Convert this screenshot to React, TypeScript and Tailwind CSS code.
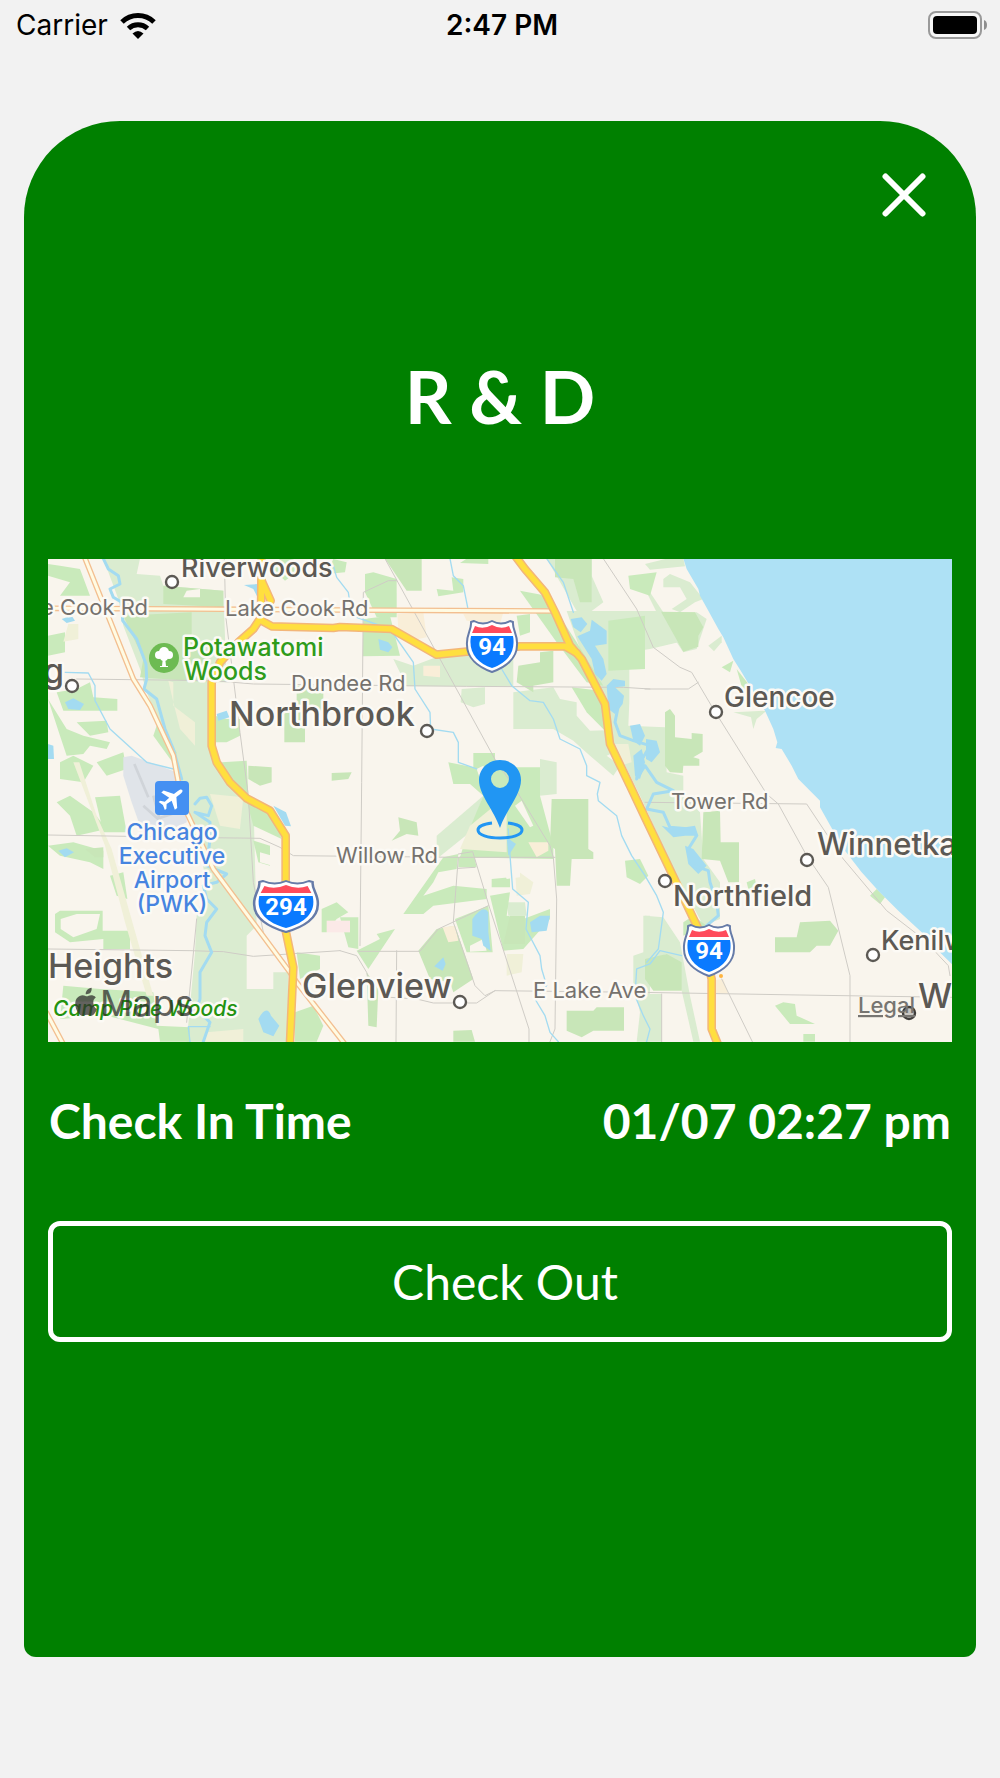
import type { ReactNode } from "react";

const forest = [
  "M190,29 L300,29 L290,75 L360,80 L370,110 L550,125 L560,400 L515,400 L515,590 L560,690 L640,750 L650,1130 L620,1160 L620,1320 L700,1320 L700,1270 L745,1270 L745,1478 L440,1478 L465,1210 L470,1100 L500,1010 L480,900 L440,790 L420,690 L360,530 L320,430 L300,360 L250,230 L235,150Z",
  "M1060,330 L1120,350 L1200,320 L1290,300 L1420,330 L1420,412 L1100,412Z",
  "M1265,420 L1335,415 L1335,465 L1300,475 L1262,460Z",
  "M1420,430 L1540,415 L1560,450 L1610,460 L1610,500 L1650,545 L1745,542 L1745,600 L1700,620 L1740,650 L1720,680 L1650,620 L1600,575 L1540,540 L1420,540Z",
  "M1500,630 L1550,640 L1550,735 L1500,740Z",
  "M1520,29 L1655,29 L1655,80 L1690,160 L1655,186 L1610,186Z",
  "M1580,186 L1860,186 L1915,280 L1830,300 L1768,310 L1768,460 L1765,530 L1875,535 L1880,670 L1930,680 L1930,740 L1980,790 L1990,930 L2040,1000 L2040,1110 L1990,1130 L1900,960 L1800,740 L1710,560 L1690,430 L1620,300Z",
  "M1815,190 L1970,190 L2000,210 L1970,300 L1930,310 L1910,280 L1815,300Z",
  "M1870,90 L1890,75 L1950,100 L1990,150 L1965,160 L1920,190 L1895,180 L1940,150 L1920,115 L1870,115Z",
  "M1815,45 L1880,29 L1930,29 L1935,52 L1830,62Z",
  "M1815,120 L1830,130 L1870,190 L1850,190Z",
  "M2005,290 L2045,260 L2045,280 L2022,307Z",
  "M2080,490 L2180,485 L2150,510 L2140,540 L2133,505Z",
  "M1815,1100 L1870,1105 L1920,1180 L1950,1340 L1980,1478 L1960,1478 L1925,1325 L1880,1215 L1815,1240Z",
  "M1815,1335 L1865,1335 L1865,1478 L1815,1478Z",
  "M1810,1100 L1830,1100 L1830,1478 L1790,1478 L1800,1390 L1780,1300 L1780,1220 L1810,1210Z",
  "M1400,1060 L1455,1060 L1460,1100 L1405,1100Z",
  "M1190,860 L1330,740 L1290,850 L1190,930Z",
];

const parks = [
  "M24,45 L60,50 L120,60 L150,140 L60,140 L90,100 L24,80Z",
  "M24,260 L75,250 L75,310 L24,320Z",
  "M50,430 L110,420 L150,400 L160,445 L232,450 L232,485 L70,485Z",
  "M24,450 L80,540 L130,560 L210,580 L200,600 L150,590 L130,615 L80,620 L60,560Z",
  "M110,520 L200,515 L205,550 L150,560Z",
  "M350,530 L410,610 L405,650 L340,560Z",
  "M60,640 L100,620 L160,650 L130,700 L60,690Z",
  "M170,640 L250,610 L260,660 L200,680Z",
  "M525,500 L560,510 L600,510 L600,560 L560,580 L525,580Z",
  "M545,640 L620,635 L625,740 L565,690Z",
  "M880,30 L920,40 L915,70 L860,75Z",
  "M720,29 L760,29 L770,70 L735,95 L700,60Z",
  "M975,75 L1000,70 L1070,90 L1070,205 L1010,205 L975,130Z",
  "M970,210 L1050,200 L1080,320 L968,322Z",
  "M1190,120 L1240,125 L1235,85 L1270,90 L1270,130 L1195,142Z",
  "M1280,29 L1345,29 L1345,45 L1260,42Z",
  "M1430,200 L1470,195 L1470,250 L1440,260Z",
  "M1440,125 L1520,140 L1610,280 L1690,410 L1640,400 L1550,280Z",
  "M1595,415 L1680,425 L1695,545 L1640,490Z",
  "M1705,215 L1815,200 L1815,360 L1705,365Z",
  "M1765,80 L1850,70 L1830,140 L1770,120Z",
  "M2090,360 L2125,405 L2110,430Z",
  "M2045,355 L2080,335 L2070,370Z",
  "M1225,640 L1300,655 L1300,612 L1365,612 L1365,655 L1500,655 L1500,740 L1540,890 L1540,930 L1260,925 L1280,860 L1330,740 L1290,705 L1240,705Z",
  "M1090,1095 L1210,925 L1255,915 L1250,960 L1195,970 L1180,1000 L1150,1040 L1240,1010 L1340,1020 L1340,1050 L1180,1070 L1150,1095Z",
  "M1245,1110 L1345,1070 L1358,1210 L1280,1210Z",
  "M1300,910 L1310,955 L1255,955 L1255,925Z",
  "M1355,990 L1410,985 L1410,1015 L1355,1015Z",
  "M1350,1040 L1410,1030 L1400,1100 L1450,1110 L1530,1080 L1530,1110 L1450,1200 L1390,1205Z",
  "M950,1205 L1020,1170 L1010,1155 L1065,1140 L985,1260Z",
  "M900,1105 L955,1105 L955,1200 L925,1195Z",
  "M1755,935 L1800,930 L1825,980 L1800,1005 L1760,985Z",
  "M2120,1000 L2145,990 L2150,1015 L2125,1020Z",
  "M2490,1040 L2510,1020 L2535,1045 L2520,1065Z",
  "M2205,1370 L2230,1360 L2265,1365 L2270,1400 L2325,1425 L2250,1425Z",
  "M2290,1455 L2325,1455 L2325,1478 L2290,1478Z",
  "M45,1095 L60,1085 L188,1085 L188,1145 L270,1145 L270,1200 L190,1200 L190,1170 L90,1180 L45,1150Z",
  "M24,890 L100,880 L190,905 L190,960 L150,940 L60,920Z",
  "M50,760 L90,740 L160,790 L200,840 L110,860 L90,800Z",
  "M165,745 L240,740 L260,850 L190,850Z",
  "M210,980 L250,970 L262,1050 L230,1040Z",
  "M70,1310 L180,1320 L340,1330 L350,1430 L450,1435 L450,1478 L360,1478 L355,1440 L200,1400 L60,1410Z",
  "M620,755 L700,785 L725,870 L640,830Z",
  "M640,875 L690,890 L690,950 L655,940Z",
  "M845,1080 L890,1060 L925,1090 L890,1110 L860,1150 L845,1150Z",
  "M770,1210 L840,1220 L840,1260 L780,1290Z",
  "M765,1390 L820,1370 L850,1430 L830,1478 L765,1478Z",
  "M1930,1120 L1960,1100 L2000,1130 L1930,1160Z",
];

const woods = [
  "M250,200 L455,190 L455,280 L500,330 L500,400 L300,385 L310,330Z",
  "M370,110 L550,125 L550,175 L370,165Z",
  "M770,410 L850,410 L850,485 L795,485 L795,580 L733,580 L733,485 L770,485Z",
  "M625,650 L695,655 L695,700 L660,710 L625,690Z",
  "M875,672 L935,670 L925,690 L875,695Z",
  "M1035,29 L1145,29 L1145,125 L1100,125Z",
  "M1545,29 L1655,29 L1655,160 L1620,160 L1600,90 L1545,85Z",
  "M1435,350 L1500,340 L1500,310 L1540,305 L1540,400 L1480,410 L1480,430 L1430,400Z",
  "M1863,188 L1965,190 L1990,235 L1975,260 L1975,293 L1930,308Z",
  "M1875,490 L1890,480 L1905,500 L1905,565 L1955,570 L1955,552 L1988,555 L1988,608 L1960,625 L1978,630 L1978,650 L1930,650 L1928,672 L1890,670 L1875,650Z",
  "M1990,790 L2040,785 L2042,880 L2097,880 L2097,1000 L2065,1000 L2040,935 L1985,930Z",
  "M2205,1165 L2270,1165 L2280,1120 L2370,1115 L2395,1145 L2370,1190 L2330,1190 L2310,1210 L2205,1210Z",
  "M1815,1230 L1880,1215 L1925,1240 L1925,1325 L1840,1325 L1815,1290Z",
  "M1535,750 L1645,750 L1645,900 L1660,910 L1660,930 L1595,930 L1590,1010 L1550,1010 L1545,900 L1530,890Z",
  "M1075,805 L1130,820 L1135,860 L1100,855 L1055,875 L1080,845Z",
  "M1135,1205 L1190,1140 L1245,1130 L1300,1290 L1240,1330 L1230,1300 L1170,1290Z",
  "M1410,1100 L1455,1100 L1455,1185 L1390,1185Z",
  "M980,1270 L1015,1320 L1010,1435 L985,1430Z",
  "M1580,1385 L1660,1385 L1670,1375 L1752,1375 L1752,1445 L1660,1445 L1625,1465 L1580,1445Z",
  "M1240,1445 L1295,1443 L1305,1478 L1240,1478Z",
  "M1310,845 L1380,840 L1380,895 L1310,880Z",
  "M135,900 L190,895 L190,925 L165,925Z",
];

const clearings = [
  "M62,1110 L110,1095 L180,1095 L170,1140 L100,1165 L62,1140Z",
  "M440,125 L480,120 L480,145 L430,145Z",
  "M1425,770 L1445,755 L1480,830 L1470,835Z",
  "M1290,1190 L1330,1170 L1340,1205 L1290,1208Z",
  "M1390,960 L1440,950 L1440,985 L1400,990Z",
  "M1310,660 L1330,650 L1345,690 L1320,690Z",
  "M400,700 L435,700 L440,740 L400,740Z",
  "M660,910 L730,930 L730,960 L660,940Z",
];

const sand = [
  "M385,395 L400,400 L400,470 L465,520 L465,590 L420,540 L405,480Z",
  "M85,225 L115,225 L115,270 L70,278Z",
  "M100,640 L118,640 L170,800 L215,900 L300,1200 L340,1340 L320,1340 L255,1120 L195,890Z",
  "M510,735 L610,745 L600,840 L540,830Z",
  "M1290,830 L1400,740 L1400,910 L1260,900Z",
  "M1425,960 L1480,1000 L1470,1035 L1430,1040Z",
  "M1400,1215 L1450,1215 L1445,1270 L1400,1280Z",
  "M1725,585 L1765,585 L1775,640 L1740,650Z",
  "M500,1450 L610,1440 L610,1478 L490,1478Z",
];

const blocks = [
  "M1072,195 L1150,190 L1160,265 L1110,275 L1075,240Z",
  "M1270,195 L1390,190 L1380,225 L1280,215Z",
  "M1465,880 L1525,880 L1525,905 L1490,925Z",
  "M1208,1135 L1245,1130 L1255,1175 L1225,1180Z",
  "M1150,350 L1200,350 L1200,385 L1150,380Z",
  "M2010,1295 L2050,1290 L2065,1335 L2010,1335Z",
];

const ponds = [
  "M75,460 L100,448 L132,465 L120,483 L85,480Z",
  "M24,585 L40,590 L42,630 L24,630Z",
  "M65,210 L95,200 L105,215 L80,222Z",
  "M530,495 L560,485 L568,505 L535,515Z",
  "M612,108 L655,105 L655,150 L640,120Z",
  "M55,905 L80,898 L102,910 L75,925Z",
  "M1015,270 L1045,280 L1057,295 L1045,310 L1020,302Z",
  "M1297,1110 Q1330,1065 1345,1090 L1345,1150 L1352,1205 L1330,1190 L1325,1170 L1297,1160Z",
  "M1470,1120 L1500,1100 L1530,1100 L1520,1145 L1475,1150Z",
  "M1183,1252 L1210,1225 L1217,1245 L1208,1265Z",
  "M1400,865 L1428,885 L1405,920Z",
  "M655,1410 Q680,1365 693,1400 L718,1430 L700,1462 L670,1450Z",
  "M700,770 L738,790 L753,832 L735,830Z",
  "M1592,210 L1625,205 L1642,225 L1622,250 L1600,235Z",
  "M1612,262 L1650,245 L1655,212 L1700,245 L1700,285 L1665,290 L1690,330 L1700,375 L1685,395 L1665,375 L1655,330Z",
  "M1720,390 L1755,395 L1755,412 L1725,415 L1752,440 L1748,465 L1725,495 L1705,480 L1700,410Z",
  "M1770,530 L1800,525 L1815,560 L1800,590 L1780,575Z",
  "M1818,570 L1850,575 L1860,610 L1835,640 L1818,630Z",
  "M1780,620 L1805,600 L1815,640 L1800,690 L1785,680Z",
  "M1865,830 L1900,840 L1965,830 L1975,860 L1935,860 L1900,865Z",
  "M1935,890 L1960,900 L2000,950 L1975,975 L1945,945Z",
];

const lake =
  "M1930,29 L1940,60 1975,120 1980,140 2005,185 2035,240 2050,265 2080,330 2105,370 2135,420 2175,485 2200,540 2212,580 2207,597 2225,600 2255,650 2275,690 2340,755 2340,775 2385,855 2415,905 2465,970 2515,1025 2575,1085 2645,1150 2695,1205 2740,1250 2740,25Z";

const rivers = [
  "M190,29 L205,60 235,80 240,105 210,120 220,145 245,160 248,215 290,270 318,345 320,390 312,420 350,450 375,540 400,600 425,690",
  "M465,765 L480,748 500,745 515,770 505,800 465,790 510,820 510,870 500,950 560,975 530,1000 490,1010 500,1050 530,1080 500,1120 495,1160 515,1210 480,1270 480,1350 470,1380 510,1420 490,1478",
  "M1735,470 L1725,520 1740,560 1780,575 1830,590 1795,650 1790,690 1815,650 1850,700 1900,725 1840,735 1820,780 1870,790 1890,835 1950,840 1970,860 1945,900 1960,950 2005,965 2010,1000 2030,1060 2035,1100 2000,1130",
];

const creeks = [
  "M75,370 L145,372 165,410 165,455 210,540 320,640 400,660",
  "M880,50 L890,85 925,130 935,200 1050,240 1120,340 1125,420 1170,490 1172,540 1240,550 1255,580 1255,640 1310,660",
  "M1230,29 L1240,80 1270,110 1283,175",
  "M1385,360 L1415,410 1470,455 1510,460 1540,510 1560,570 1620,600 1640,650 1640,680 1680,700 1672,735 1675,755 1730,800 1745,860 1775,920 1815,980 1850,1040 1870,1090 1855,1200 1820,1240",
  "M1520,29 L1570,100 1600,190",
  "M1405,840 L1410,920 1418,1020 1465,1060 1458,1140 1500,1220 1505,1260 1520,1310 1485,1350 1515,1400 1530,1450 1555,1478",
  "M1925,1220 L1860,1205 1830,1245 1790,1260 1785,1340 1810,1400 1830,1440 1820,1478",
  "M445,1433 L510,1433 M445,1435 L450,1478",
];

const streets = [
  "M110,390 L520,395 640,405 900,408 1280,412 1750,415 1830,420",
  "M553,29 L557,200 600,550 625,740 640,1000 670,1150",
  "M24,858 L440,865 660,868 720,895 760,920 1255,925 1545,925",
  "M24,1200 L450,1205 550,1208 640,1222 900,1205 M955,1207 L1140,1207 1195,1140 1345,1070",
  "M900,1205 L950,1220 980,1270 1000,1340",
  "M1070,95 L1045,95 970,130 965,700 960,1190",
  "M1035,29 L1370,640 1420,710 1530,890 1540,925 1550,1050 1545,1440 1530,1478",
  "M1255,925 L1240,1120 1305,1310 1335,1340 1365,1325 1800,1330 2280,1338 2736,1345",
  "M1255,915 L1298,908 1350,1080 1467,1440 1467,1478",
  "M1255,958 L1305,955",
  "M1070,1205 L1068,1478",
  "M470,1110 L440,1420",
  "M1050,1345 L1130,1350 1180,1362 1310,1362 1365,1325",
  "M1690,29 L1790,180 1840,295 1920,355 1955,370 2020,480 2180,735 2215,765 2300,920 2365,1015 2430,1280 2430,1478",
  "M1815,420 L1945,420 1975,400",
  "M1815,760 L2300,765 2410,930 2540,1085 2650,1170 2725,1250 2730,1280",
  "M2045,1290 L2137,1478",
  "M1865,1335 L1865,1478",
];

const mainRoads = [
  "M20,178 L455,180 900,183 1540,186",
  "M132,20 L200,190 280,390 330,470 400,620 415,700 440,790 520,960 750,1270 770,1300 912,1482",
  "M20,1392 L68,1482",
];

const highways = [
  "M1425,20 L1455,60 1515,130 1545,190 1590,290 1625,330 1695,465 1710,585 1770,710 1815,805 1980,1150 2015,1290 2015,1440 2032,1482",
  "M665,20 L663,205 640,240 595,280 540,340 515,400 515,590 530,640 570,700 620,748 690,785 737,860 737,1145 760,1255 750,1482",
  "M665,95 L692,155",
  "M665,215 L695,232 880,237 900,234 1055,240 1190,317 1280,308 1440,292 1575,292 1610,312",
];

const towns = [
  { name: "Riverwoods", x: 133, y: 18, size: 27, dot: [124, 23] },
  { name: "Northbrook", x: 181, y: 167, size: 34, dot: [379, 172] },
  { name: "Glencoe", x: 676, y: 148, size: 28, dot: [668, 153] },
  { name: "Winnetka", x: 769, y: 296, size: 31, dot: [759, 301] },
  { name: "Northfield", x: 625, y: 347, size: 29, dot: [617, 322] },
  { name: "Kenilworth", x: 833, y: 391, size: 27, dot: [825, 396] },
  { name: "Glenview", x: 254, y: 439, size: 34, dot: [412, 443] },
];

const roadNames = [
  { name: "Lake Cook Rd", x: 177, y: 57 },
  { name: "Dundee Rd", x: 243, y: 132 },
  { name: "Tower Rd", x: 623, y: 250 },
  { name: "Willow Rd", x: 288, y: 304 },
  { name: "E Lake Ave", x: 485, y: 439 },
];

function Areas({ paths, fill }: { paths: string[]; fill: string }) {
  return (
    <g fill={fill}>
      {paths.map((d) => (
        <path key={d} d={d} />
      ))}
    </g>
  );
}

function Lines({ paths, stroke, width }: { paths: string[]; stroke: string; width: number }) {
  return (
    <g fill="none" stroke={stroke} strokeWidth={width} strokeLinejoin="round" strokeLinecap="round">
      {paths.map((d) => (
        <path key={d} d={d} />
      ))}
    </g>
  );
}

function TownDot({ x, y }: { x: number; y: number }) {
  return <circle cx={x} cy={y} r="6" fill="#fff" stroke="#5c5954" strokeWidth="2.4" />;
}

function Halo({ children }: { children: ReactNode }) {
  return (
    <g stroke="#fcfaf5" strokeWidth="5" strokeLinejoin="round" className="[paint-order:stroke]">
      {children}
    </g>
  );
}

function Shield({ x, y, label, wide = false }: { x: number; y: number; label: string; wide?: boolean }) {
  const sx = wide ? 1.27 : 1;
  return (
    <g transform={`translate(${x} ${y})`}>
      <g transform={`scale(${sx} 1)`}>
        <path
          d="M-18,-25 Q-9,-20 0,-25 Q9,-20 18,-25 L21,-24 C20,-17 26,-11 25,-1 C25,12 14,21 0,26 C-14,21 -25,12 -25,-1 C-26,-11 -20,-17 -21,-24Z"
          fill="#fff"
          stroke="#667ba8"
          strokeWidth="2"
          strokeLinejoin="round"
        />
        <path d="M-17,-20 Q-9,-16 0,-21 Q9,-16 17,-20 L20,-13 L-20,-13Z" fill="#ff4b5b" />
        <path d="M-21,-10 L21,-10 C24,6 15,17 0,22 C-15,17 -24,6 -21,-10Z" fill="#0a7aff" />
      </g>
      <text y="9" textAnchor="middle" fill="#fff" className="font-['Roboto',sans-serif] text-[24px] font-bold">
        {label}
      </text>
    </g>
  );
}

function AreaMap() {
  return (
    <svg
      viewBox="0 0 904 483"
      role="img"
      aria-label="Map around Northbrook and Glenview"
      className="block h-auto w-full font-['Inter',sans-serif]"
    >
      <rect width="904" height="483" fill="#f9f5ed" />
      <g transform="translate(-8 -10) scale(0.33333)">
        <Areas paths={forest} fill="#daecd0" />
        <Areas paths={parks} fill="#c9eabb" />
        <Areas paths={woods} fill="#c8e6b8" />
        <Areas paths={sand} fill="#f0f0d8" />
        <Areas paths={blocks} fill="#f9eed8" />
        <Areas paths={clearings} fill="#f9f5ed" />
        <path d="M860,1115 L930,1115 L930,1150 L860,1150Z" fill="#fbe9e7" />
        <path d="M250,625 L275,620 L330,640 L410,670 L440,760 L440,820 L380,850 L300,830 L275,760 L250,680Z" fill="#e0e4e9" />
        <path d="M283,645 L325,745 M310,770 L360,815 L340,740 M350,810 L440,780" fill="none" stroke="#d0d4d9" strokeWidth="8" />
        <Lines paths={streets} stroke="#cfccc6" width={3} />
        <path d={lake} fill="#aee1f5" />
        <Areas paths={ponds} fill="#a3dbf1" />
        <Lines paths={rivers} stroke="#a3dbf1" width={9} />
        <Lines paths={creeks} stroke="#a3dbf1" width={4} />
        <Lines paths={mainRoads} stroke="#f3bf90" width={17} />
        <Lines paths={mainRoads} stroke="#fffbe3" width={9} />
        <Lines paths={highways} stroke="#f3b679" width={26} />
        <Lines paths={highways} stroke="#ffdf3f" width={17} />
      </g>

      <Shield x={444} y={87} label="94" />
      <Shield x={238} y={347} label="294" wide />
      <Shield x={661} y={391} label="94" />
      <circle cx="673" cy="417" r="2" fill="#ffb43f" />

      <Halo>
        <g fill="#75726e" className="text-[22px]">
          <text x="100" y="56" textAnchor="end">
            e Cook Rd
          </text>
          {roadNames.map((r) => (
            <text key={r.name} x={r.x} y={r.y}>
              {r.name}
            </text>
          ))}
        </g>
        <g fill="#5c5954" className="font-medium">
          {towns.map((t) => (
            <text key={t.name} x={t.x} y={t.y} fontSize={t.size}>
              {t.name}
            </text>
          ))}
          <text x="16" y="124" textAnchor="end" fontSize="34">
            g
          </text>
          <text x="125" y="419" textAnchor="end" fontSize="34">
            Heights
          </text>
          <text x="870" y="449" fontSize="34">
            W
          </text>
        </g>
        <g fill="#2f9c1c" className="text-[25px] font-medium">
          <text x="135" y="97">
            Potawatomi
          </text>
          <text x="136" y="121">
            Woods
          </text>
        </g>
        <g fill="#4684e0" textAnchor="middle" className="text-[23px] font-medium">
          <text x="124" y="281">
            Chicago
          </text>
          <text x="124" y="305">
            Executive
          </text>
          <text x="124" y="329">
            Airport
          </text>
          <text x="124" y="353">
            (PWK)
          </text>
        </g>
        <text x="5" y="457" fill="#249310" className="text-[21px] font-medium italic">
          Camp Pine Woods
        </text>
      </Halo>

      {towns.map((t) => (
        <TownDot key={t.name} x={t.dot[0]} y={t.dot[1]} />
      ))}
      <TownDot x={24} y={127} />
      <circle cx="861" cy="454" r="6" fill="#c9c7c2" stroke="#3f3d3a" strokeWidth="2.4" />

      {/* park */}
      <circle cx="116" cy="99" r="15" fill="#6dbb52" />
      <g fill="#fff">
        <circle cx="116" cy="93" r="5" />
        <circle cx="111" cy="96" r="4" />
        <circle cx="121" cy="96" r="4" />
        <circle cx="116" cy="98" r="4" />
        <path d="M115,98 h2 l1,9 h2 v1 h-8 v-1 h2z" />
      </g>

      {/* airport */}
      <rect x="107" y="222" width="34" height="34" rx="4" fill="#4590f2" />
      <path
        transform="translate(124 239) rotate(52)"
        d="M0,-13 C1.5,-13 2,-11 2,-9 L2,-4 L11,2 L11,5 L2,2 L1.5,8 L5,11 L5,13 L0,11.5 L-5,13 L-5,11 L-1.5,8 L-2,2 L-11,5 L-11,2 L-2,-4 L-2,-9 C-2,-11 -1.5,-13 0,-13Z"
        fill="#fff"
      />

      {/* attribution */}
      <g fill="#30302e" opacity="0.75">
        <path
          transform="translate(26 428) scale(1.25 1.2)"
          d="M15.4,12.6 C15.4,10.1 17.4,8.9 17.5,8.8 C16.4,7.1 14.6,6.9 14,6.9 C12.5,6.7 11,7.8 10.3,7.8 C9.5,7.8 8.3,6.9 7,6.9 C3.600,7 1,9.7 1,14.1 C1,19.5 4.600,24 6.900,24 C8.200,24 8.800,23.1 10.400,23.1 C12,23.1 12.500,24 13.800,24 C15.900,24 17.700,20.6 18.300,18.400 C16.500,17.600 15.400,15.600 15.400,12.600Z M12.900,5.100 C13.700,4.200 14.300,2.500 14.100,0.600 C12.800,0.800 11.300,1.600 10.500,2.600 C9.800,3.500 9.200,5 9.400,6 C10.700,6.100 12.100,5.900 12.900,5.100Z"
        />
        <text x="52" y="457" className="text-[36px]">
          Maps
        </text>
      </g>
      <a href="#legal">
        <text x="810" y="454" fill="#777571" className="text-[22px] font-medium underline">
          Legal
        </text>
      </a>

      {/* check-in position */}
      <path d="M444,264 C435,265 430,268 430,271 C430,276 440,279 452,279 C464,279 474,276 474,271 C474,268 469,265 460,264" fill="none" stroke="#2196f3" strokeWidth="3" />
      <path
        d="M452,201 C440,201 431,210 431,221 C431,236 446,251 452,269 C458,251 473,236 473,221 C473,210 464,201 452,201Z M452,211 A9,9 0 1 1 452,229 A9,9 0 1 1 452,211Z"
        fill="#2196f3"
        fillRule="evenodd"
      />
    </svg>
  );
}

function StatusBar() {
  return (
    <header className="grid h-[50px] grid-cols-3 items-center pr-3 pl-4 font-['Inter',sans-serif] text-[28px] leading-none text-black">
      <div className="flex items-center gap-3">
        <span>Carrier</span>
        <svg viewBox="0 0 36 27" className="h-[27px] w-9" aria-label="Wi-Fi" fill="none" stroke="#000" strokeWidth="5">
          <path d="M2,10 A23,23 0 0 1 34,10" />
          <path d="M8.500,16.500 A14,14 0 0 1 27.500,16.500" />
          <path d="M18,27 L12.500,21.500 Q18,16.500 23.500,21.500Z" fill="#000" stroke="none" />
        </svg>
      </div>
      <time className="text-center font-semibold">2:47 PM</time>
      <svg viewBox="0 0 60 28" className="h-7 w-[60px] justify-self-end" aria-label="Battery full">
        <rect x="1" y="1" width="52" height="26" rx="7" fill="#f7f7f7" stroke="#9a9a9a" strokeWidth="2" />
        <rect x="5" y="5" width="44" height="18" rx="4" />
        <path d="M56,9 Q59,10 59,14 Q59,18 56,19Z" fill="#8e8e8e" />
      </svg>
    </header>
  );
}

export default function App() {
  return (
    <div className="min-h-screen bg-[#f2f2f2] pb-[120px]">
      <StatusBar />
      <main className="mx-6 mt-[71px] flex min-h-[1536px] flex-col rounded-t-[96px] rounded-b-xl bg-[#008000] px-6 font-['Lato',sans-serif] text-white">
        <button type="button" aria-label="Close" className="mt-12 mr-[22px] self-end p-1">
          <svg viewBox="0 0 44 44" className="size-11" stroke="currentColor" strokeWidth="6" strokeLinecap="round">
            <path d="M3.500,3.500 L40.500,40.500 M40.500,3.500 L3.500,40.500" />
          </svg>
        </button>

        <h1 className="mt-[127px] text-center text-[73px] leading-[96px] font-bold">R &amp; D</h1>

        <div className="mt-[115px]">
          <AreaMap />
        </div>

        <dl className="mt-[47px] flex items-center justify-between px-px text-5xl leading-16 font-bold">
          <dt>Check In Time</dt>
          <dd>01/07 02:27 pm</dd>
        </dl>

        <button type="button" className="mt-[68px] h-[121px] w-full rounded-xl border-5 border-white pl-[10px] text-5xl">
          Check Out
        </button>
      </main>
    </div>
  );
}
